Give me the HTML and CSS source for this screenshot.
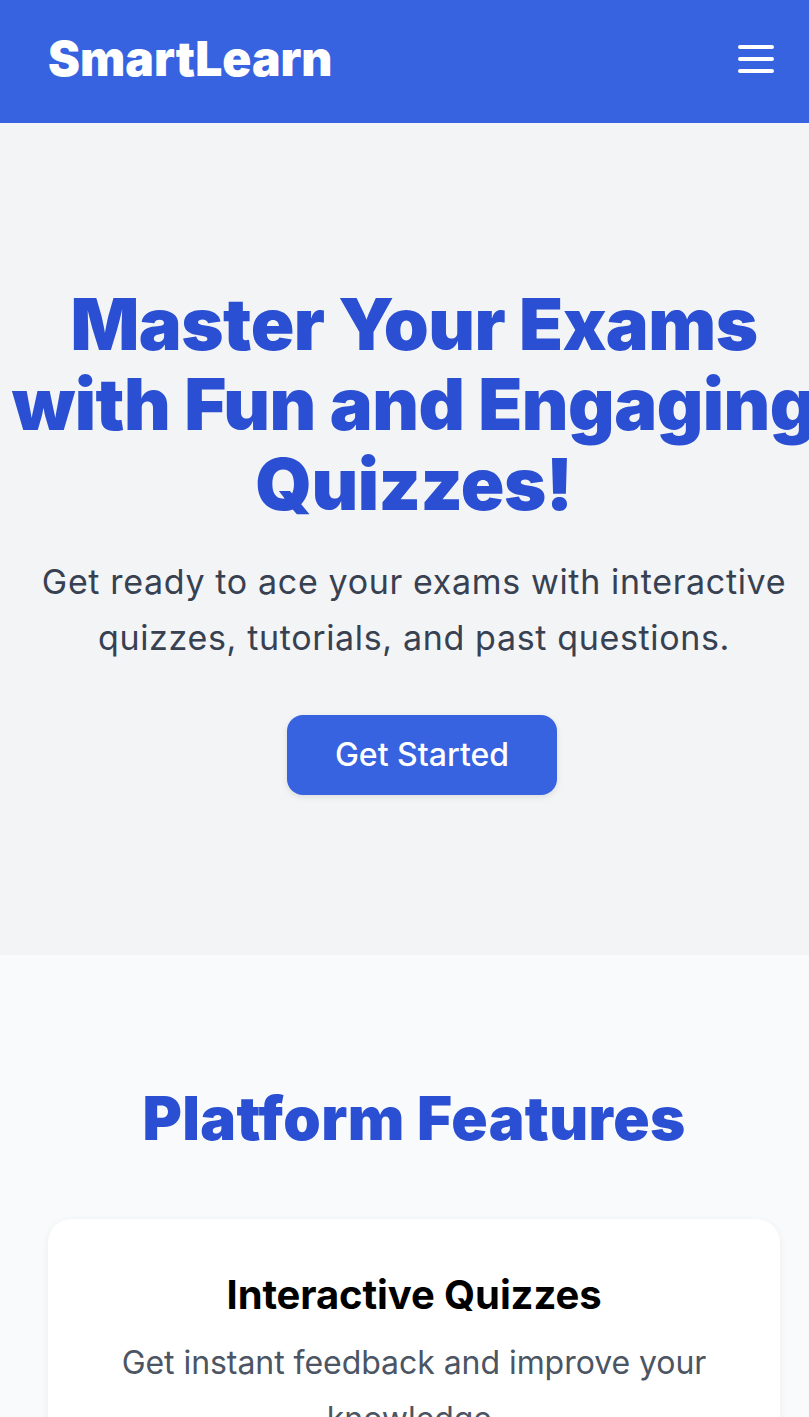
FILE: index.html
```html
<!DOCTYPE html>
<html lang="en">
<head>
<meta charset="utf-8">
<title>SmartLearn</title>
<link rel="stylesheet" href="styles.css">
</head>
<body>
<div class="page">
  <header class="topbar">
    <div class="logo">SmartLearn</div>
    <button class="menu-btn" aria-label="Open menu">
      <svg width="48" height="48" viewBox="0 0 24 24" fill="none" stroke="currentColor" stroke-width="2" stroke-linecap="round" stroke-linejoin="round"><path d="M4 6h16M4 12h16M4 18h16"/></svg>
    </button>
  </header>

  <section class="hero">
    <h1 class="hero-title">Master Your Exams<br>with Fun and Engaging<br>Quizzes!</h1>
    <p class="hero-sub">Get ready to ace your exams with interactive quizzes, tutorials, and past questions.</p>
    <div class="hero-cta"><a class="btn" href="#">Get Started</a></div>
  </section>

  <section class="features">
    <h2 class="features-title">Platform Features</h2>
    <div class="feature-list">
      <div class="card">
        <h3 class="card-title">Interactive Quizzes</h3>
        <p class="card-text">Get instant feedback and improve your knowledge.</p>
      </div>
      <div class="card">
        <h3 class="card-title">Tutorials</h3>
        <p class="card-text">Learn step by step with clear, guided lessons.</p>
      </div>
      <div class="card">
        <h3 class="card-title">Past Questions</h3>
        <p class="card-text">Practice with real questions from previous exams.</p>
      </div>
    </div>
  </section>
</div>
</body>
</html>
```

FILE: styles.css
```css
html { overflow-x: hidden; }
body {
  margin: 0;
  font-family: Inter, "Noto Sans", "Liberation Sans", sans-serif;
  background: #f9fafb;
}
.page {
  width: 828px;
}
.topbar {
  display: flex;
  align-items: center;
  justify-content: space-between;
  height: 123px;
  box-sizing: border-box;
  padding: 0 48px;
  background: #3763e0;
  color: #fff;
}
.logo {
  font-size: 48px;
  line-height: 64px;
  font-weight: 900;
  letter-spacing: 0;
  margin-top: -6px;
}
.menu-btn {
  background: none;
  border: 0;
  padding: 0;
  color: #fff;
  display: flex;
  margin-top: -5px;
}
.hero {
  background: #f3f4f6;
  padding: 161px 8px 160px;
  text-align: center;
}
.hero-title {
  margin: 0 0 30px;
  font-size: 72px;
  line-height: 80px;
  font-weight: 900;
  color: #2b4fd2;
  letter-spacing: -0.5px;
  white-space: nowrap;
}
.hero-sub {
  margin: 0 auto 49px;
  max-width: 768px;
  font-size: 34px;
  line-height: 56px;
  color: #374151;
  letter-spacing: 0.65px;
}
.hero-cta {
  padding-left: 16px;
}
.btn {
  display: inline-block;
  padding: 16px 48px;
  font-size: 32px;
  line-height: 48px;
  font-weight: 500;
  color: #fff;
  text-decoration: none;
  background: #3763e0;
  border-radius: 16px;
  box-shadow: 0 2px 6px rgba(0,0,0,0.1);
}
.features {
  background: #f9fafb;
  padding: 127px 48px 128px;
}
.features-title {
  margin: 0 0 65px;
  text-align: center;
  font-size: 60px;
  line-height: 72px;
  font-weight: 900;
  color: #2b4fd2;
  letter-spacing: 0.4px;
}
.feature-list {
  display: flex;
  flex-direction: column;
  gap: 48px;
}
.card {
  background: #fff;
  border-radius: 24px;
  padding: 48px;
  text-align: center;
  box-shadow: 0 2px 8px rgba(0,0,0,0.06);
}
.card-title {
  margin: 0 0 12px;
  font-size: 40px;
  line-height: 56px;
  font-weight: 700;
  color: #000;
  letter-spacing: -0.1px;
}
.card-text {
  margin: 0;
  font-size: 32px;
  line-height: 56px;
  color: #4b5563;
  letter-spacing: -0.05px;
}
```
